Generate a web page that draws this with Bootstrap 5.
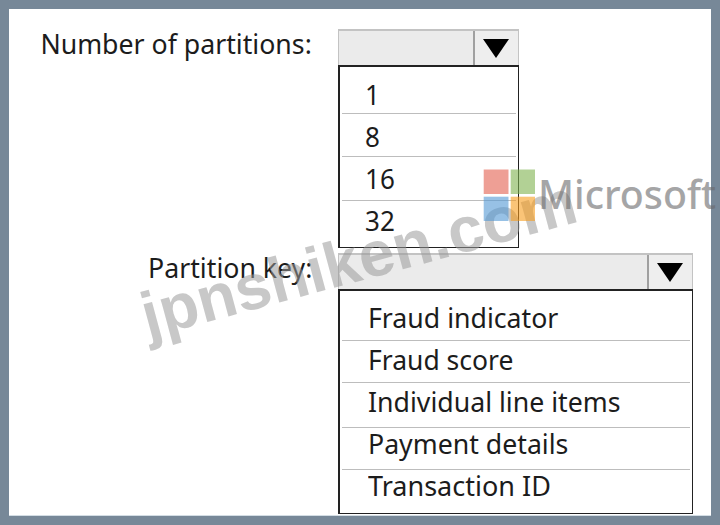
<!DOCTYPE html>
<html lang="en">
<head>
<meta charset="utf-8">
<title>Partitions</title>
<link href="https://cdn.jsdelivr.net/npm/bootstrap@5.3.0/dist/css/bootstrap.min.css" rel="stylesheet">
<style>
body{width:720px;height:525px;overflow:hidden;background:#778898;font-family:"Noto Sans",sans-serif;font-size:28px;color:#1c1c1c}
.frame{height:525px;padding:9px}
.board{width:702px;height:507px;border-bottom:1px solid #d3dde4}
.field-a{padding-top:20px}
.field-b{padding-top:5px}
.caption{width:303px;height:30px;line-height:30px}
.field-a .caption{margin-top:-1px}
.field-b .caption{margin-top:-1px}
.caption,.choice{white-space:nowrap}
.gutter{width:26px}
.fit{display:inline-block;transform:scaleX(.953);transform-origin:0 50%}
.caption .fit{transform-origin:100% 50%}
.fit.f3{transform:scaleX(.946)}
.fit.f6{transform:scaleX(.965)}
.fit.n{transform:scaleX(.93)}
.picker-a{width:181px}
.picker-b{width:355px}
.bar{height:36px;background:#ebebeb;border:1px solid #c3c3c3;border-top-width:2px;border-bottom:0}
.arrow{width:45px;border-left:2px solid #a0a0a0;background:#eee;padding:2px 2px 0 0}
.menu{border:solid #222;border-width:2px 1px 1px 2px;background:#fff;padding:0 2px}
.choice{line-height:30px;border-bottom:1px solid #bdbdbd;padding-left:23px}
.choice:last-child{border-bottom:0}
.picker-b .choice{padding-left:26px}
.picker-a .menu{height:183px}
.picker-b .menu{height:225px}
.a1{height:47px;padding-top:12px}.a2{height:43px;padding-top:7px}.a3{height:44px;padding-top:6px}.a4{height:45px;padding-top:4px}
.b1{height:50px;padding-top:11px}.b2{height:42px;padding-top:3px}.b3{height:45px;padding-top:3px}.b4{height:42px;padding-top:0}.b5{height:43px;padding-top:0}
.overlay{position:absolute;left:0;top:0;pointer-events:none}
.stamp{font-family:"Liberation Sans",sans-serif;font-weight:700;font-size:64px;fill:#9a9a9a;fill-opacity:.54}
.brand{font-family:"Noto Sans",sans-serif;font-weight:500;font-size:40px;fill:#6a6a6c}
</style>
</head>
<body>
<main class="frame">
  <div class="board bg-white">
    <section class="field-a d-flex">
      <div class="caption text-end"><span class="fit">Number of partitions:</span></div>
      <div class="gutter"></div>
      <div class="picker-a">
        <div class="bar d-flex justify-content-end"><div class="arrow d-flex align-items-center justify-content-center"><svg width="26" height="20"><path d="M0 0H26L13 19Z"/></svg></div></div>
        <div class="menu">
          <div class="choice a1"><span class="fit n">1</span></div>
          <div class="choice a2"><span class="fit n">8</span></div>
          <div class="choice a3"><span class="fit n">16</span></div>
          <div class="choice a4"><span class="fit n">32</span></div>
        </div>
      </div>
    </section>
    <section class="field-b d-flex">
      <div class="caption text-end"><span class="fit">Partition key:</span></div>
      <div class="gutter"></div>
      <div class="picker-b">
        <div class="bar d-flex justify-content-end"><div class="arrow d-flex align-items-center justify-content-center"><svg width="26" height="20"><path d="M0 0H26L13 19Z"/></svg></div></div>
        <div class="menu">
          <div class="choice b1"><span class="fit">Fraud indicator</span></div>
          <div class="choice b2"><span class="fit f3">Fraud score</span></div>
          <div class="choice b3"><span class="fit">Individual line items</span></div>
          <div class="choice b4"><span class="fit">Payment details</span></div>
          <div class="choice b5"><span class="fit f6">Transaction ID</span></div>
        </div>
      </div>
    </section>
  </div>
</main>
<svg class="overlay" width="720" height="525" viewBox="0 0 720 525">
  <text class="stamp" transform="translate(148 338) rotate(-15.1)" textLength="448">jpnshiken.com</text>
  <g opacity=".6">
    <path fill="#e46150" d="M483.7 169.5H508.5V194H483.7Z"/>
    <path fill="#7fb450" d="M510.7 169.5H535V194H510.7Z"/>
    <path fill="#5399d5" d="M483.7 196.7H508.5V221H483.7Z"/>
    <path fill="#f79d1e" d="M510.7 196.7H535V221H510.7Z"/>
    <text class="brand" x="538" y="208.5" textLength="178" lengthAdjust="spacingAndGlyphs">Microsoft</text>
  </g>
</svg>
<script src="https://cdn.jsdelivr.net/npm/bootstrap@5.3.0/dist/js/bootstrap.bundle.min.js"></script>
</body>
</html>
